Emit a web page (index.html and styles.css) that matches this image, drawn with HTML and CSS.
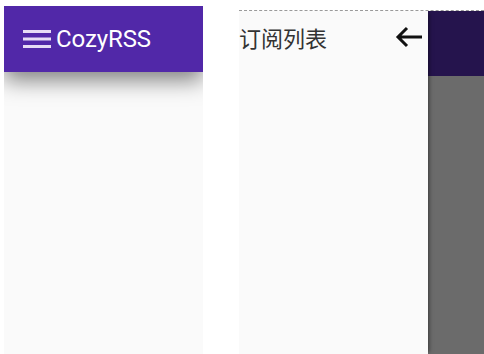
FILE: index.html
```html
<!DOCTYPE html>
<html lang="en">
<head>
  <meta charset="UTF-8" />
  <title>CozyRSS</title>
  <link rel="stylesheet" href="styles.css">
</head>
<body>
  <div class="stage">
    <div class="screen main">
      <header class="appbar">
        <svg class="menu" width="28" height="20" viewBox="0 0 28 20">
          <rect x="0" y="1" width="28" height="3" fill="#e6dcf5"/>
          <rect x="0" y="8.5" width="28" height="3" fill="#e6dcf5"/>
          <rect x="0" y="16" width="28" height="3" fill="#e6dcf5"/>
        </svg>
        <span class="brand">CozyRSS</span>
      </header>
      <div class="content"></div>
    </div>

    <div class="screen open">
      <aside class="drawer">
        <div class="drawer-head">
          <span class="drawer-title">订阅列表</span>
          <svg class="back" width="28" height="22" viewBox="0 0 28 22">
            <path d="M12 2 L3 11 L12 20 M3 11 H27" fill="none" stroke="#111" stroke-width="3"/>
          </svg>
        </div>
      </aside>
      <div class="scrim">
        <div class="scrim-bar"></div>
        <div class="scrim-body"></div>
      </div>
    </div>
  </div>
</body>
</html>
```

FILE: styles.css
```css
body {
  margin: 0;
  background: #ffffff;
  font-family: Roboto, "Noto Sans CJK SC", sans-serif;
  height: 354px;
  overflow: hidden;
}

.stage {
  display: flex;
  gap: 36px;
  height: 354px;
}

.screen {
  display: flex;
  overflow: hidden;
}

.main {
  flex-direction: column;
  width: 199px;
  margin: 6px 0 0 4px;
  background: #fafafa;
}

.appbar {
  height: 66px;
  flex-shrink: 0;
  background: #5128a8;
  display: flex;
  align-items: center;
  padding-left: 19px;
  gap: 5px;
  box-shadow: 0 8px 22px rgba(0,0,0,0.5);
  position: relative;
}

.brand {
  color: #ffffff;
  font-size: 24px;
  letter-spacing: -0.1px;
}

.content {
  flex: 1;
}

.open {
  flex: 1;
  margin-top: 10px;
  border-top: 1px dashed #9a9a9a;
}

.drawer {
  width: 189px;
  background: #fafafa;
  position: relative;
  z-index: 1;
  box-shadow: 3px 0 4px -2px rgba(0,0,0,0.5);
}

.drawer-head {
  display: flex;
  align-items: center;
  justify-content: space-between;
  height: 52px;
  padding-right: 5px;
}

.drawer-title {
  font-size: 22px;
  color: #333333;
  margin-top: -1px;
}

.back {
  margin-top: -1px;
}

.scrim {
  flex: 1;
  display: flex;
  flex-direction: column;
}

.scrim-bar {
  height: 65px;
  background: #25144d;
}

.scrim-body {
  flex: 1;
  background: #6b6b6b;
}
```
